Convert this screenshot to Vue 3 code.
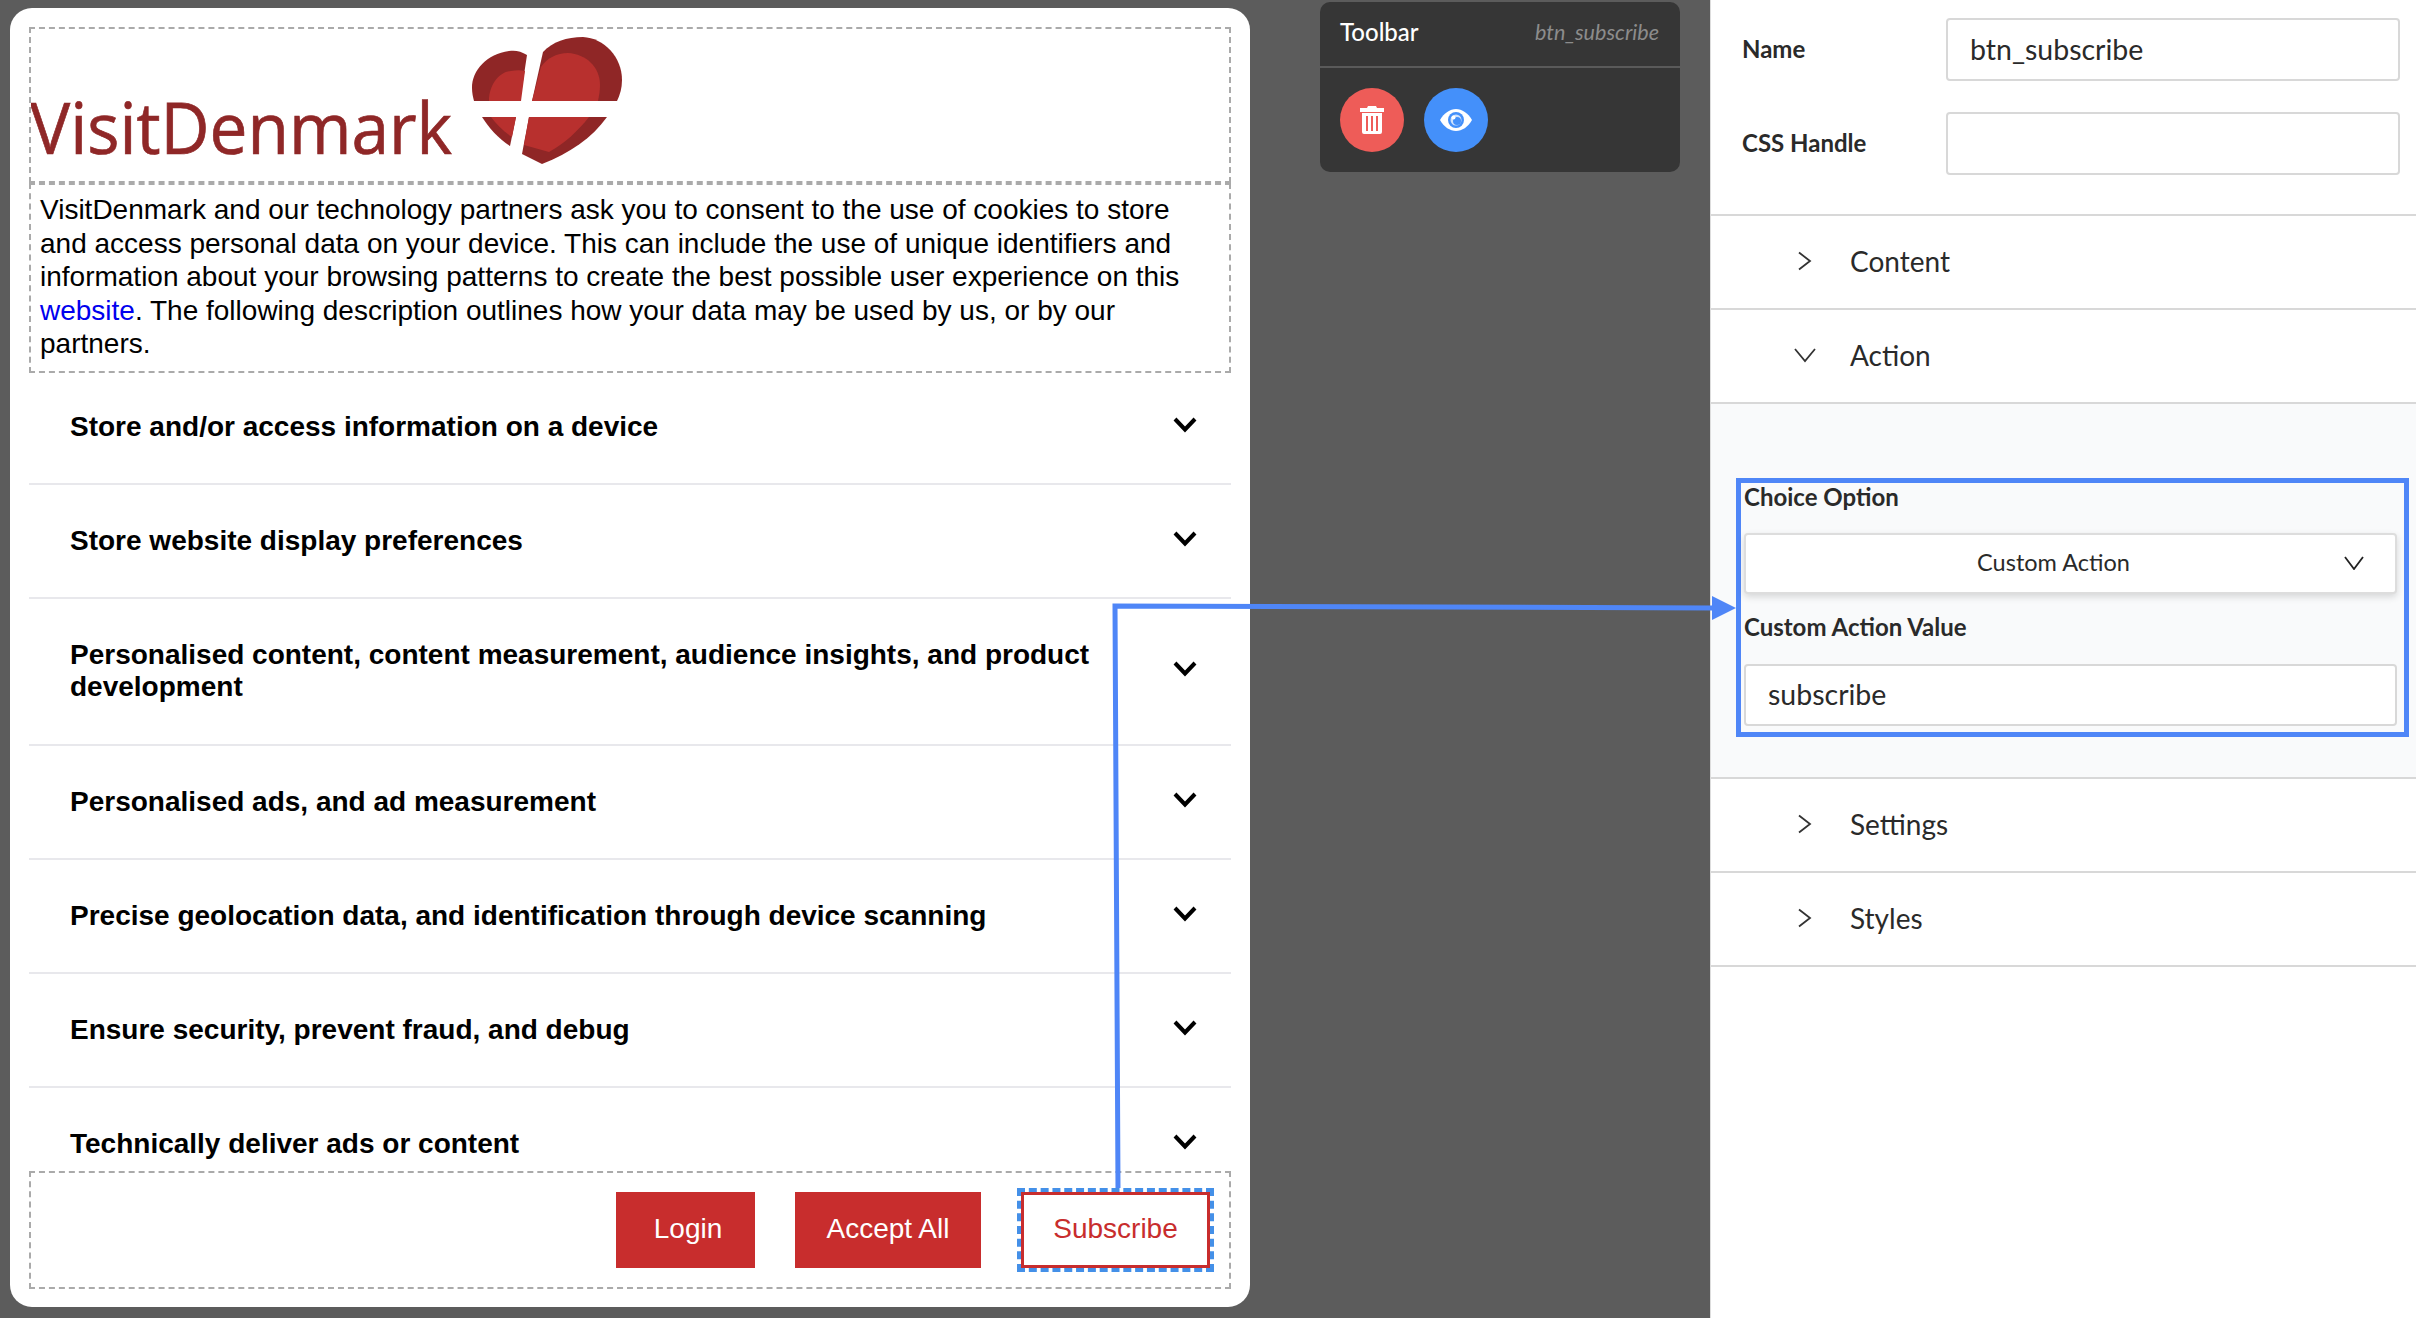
<template>
  <div class="page">
    <div class="stage">
      <section class="card">
        <div class="logo-box">
          <svg class="logo" width="600" height="150" viewBox="29 27 600 150">
            <text x="30" y="154" class="logo-text" textLength="422" lengthAdjust="spacingAndGlyphs">VisitDenmark</text>
            <path fill="#8f2626" d="M527 55C521 51 515 50 509 51C487 54 472 70 472 88C472 93 473 97 474 101H520Z" />
            <path fill="#b8302e" d="M489 101C489 85 499 72 511 71C516 70 521 70 525 71L521 101Z" />
            <path fill="#8f2626" d="M532 101L543 52C552 42 567 37 583 37C604 38 622 57 622 80C622 88 620 95 617 101Z" />
            <path fill="#b8302e" d="M532 101L541 67C547 58 557 53 568 53C586 54 600 67 600 85C600 91 599 96 598 101Z" />
            <path fill="#8f2626" d="M482 117H516L510 146C498 138 489 128 482 117Z" />
            <path fill="#b8302e" d="M491 117H516L512 137C503 131 496 124 491 117Z" />
            <path fill="#8f2626" d="M529 117H607C592 138 570 153 542 164L522 154Z" />
            <path fill="#b8302e" d="M529 117H589C578 131 565 143 549 152L524 145Z" />
          </svg>
        </div>
        <div class="intro">
          <span class="intro-line">VisitDenmark and our technology partners ask you to consent to the use of cookies to store and access personal data on your device. This can include the use of unique identifiers and information about your browsing patterns to create the best possible user experience on this</span>
          <span class="intro-line"><a class="link">website</a><span>. The following description outlines how your data may be used by us, or by our</span></span>
          <span class="intro-line">partners.</span>
        </div>
        <div class="purposes">
          <div v-for="p in purposes" :key="p" class="purpose">
            <span class="purpose-text">{{ p }}</span>
            <svg class="chev" width="24" height="16" viewBox="0 0 24 16">
              <polyline points="2,2 12,12.5 22,2" fill="none" stroke="#000" stroke-width="4" />
            </svg>
          </div>
        </div>
        <div class="actions">
          <button class="btn login">Login</button>
          <button class="btn accept">Accept All</button>
          <div class="selected">
            <button class="btn subscribe">Subscribe</button>
          </div>
        </div>
      </section>

      <aside class="toolbar">
        <header class="toolbar-head">
          <span class="toolbar-title">Toolbar</span>
          <em class="toolbar-name">btn_subscribe</em>
        </header>
        <div class="toolbar-body">
          <button class="round red">
            <svg width="24" height="28" viewBox="0 0 24 28">
              <path fill="#fff" d="M8 0h8l1 2h7v4H0V2h7z" />
              <path fill="#fff" fill-rule="evenodd" d="M2 7h20v19a2 2 0 0 1-2 2H4a2 2 0 0 1-2-2zM6 10v15h2V10zM11 10v15h2V10zM16 10v15h2V10z" />
            </svg>
          </button>
          <button class="round blue">
            <svg width="32" height="22" viewBox="0 0 32 22">
              <path fill="#fff" d="M0 11C4 4 10 0 16 0s12 4 16 11c-4 7-10 11-16 11S4 18 0 11z" />
              <circle cx="16" cy="11" r="8" fill="#4490fa" />
              <circle cx="16" cy="11" r="5.500" fill="#cfe2fd" />
              <circle cx="17" cy="12" r="4" fill="#4490fa" />
              <circle cx="13.500" cy="8.500" r="2" fill="#fff" />
            </svg>
          </button>
        </div>
      </aside>
    </div>

    <aside class="panel">
      <div class="fields">
        <label class="field">
          <span class="field-label">Name</span>
          <input class="text-input" value="btn_subscribe" readonly />
        </label>
        <label class="field">
          <span class="field-label">CSS Handle</span>
          <input class="text-input" value="" readonly />
        </label>
      </div>

      <div class="section">
        <svg class="sec-icon" width="28" height="20" viewBox="0 0 28 20">
          <polyline points="8,1.500 19,10 8,18.500" fill="none" stroke="#333" stroke-width="1.800" />
        </svg>
        <span>Content</span>
      </div>
      <div class="section">
        <svg class="sec-icon" width="28" height="20" viewBox="0 0 28 20">
          <polyline points="4,4 14,16 24,4" fill="none" stroke="#333" stroke-width="1.800" />
        </svg>
        <span>Action</span>
      </div>

      <div class="section-body">
        <div class="highlight">
          <div class="hl-label">Choice Option</div>
          <div class="select">
            <span>Custom Action</span>
            <svg class="select-icon" width="20" height="14" viewBox="0 0 20 14">
              <polyline points="1,1 10,13 19,1" fill="none" stroke="#222" stroke-width="1.800" />
            </svg>
          </div>
          <div class="hl-label second">Custom Action Value</div>
          <input class="text-input wide" value="subscribe" readonly />
        </div>
      </div>

      <div class="section">
        <svg class="sec-icon" width="28" height="20" viewBox="0 0 28 20">
          <polyline points="8,1.500 19,10 8,18.500" fill="none" stroke="#333" stroke-width="1.800" />
        </svg>
        <span>Settings</span>
      </div>
      <div class="section">
        <svg class="sec-icon" width="28" height="20" viewBox="0 0 28 20">
          <polyline points="8,1.500 19,10 8,18.500" fill="none" stroke="#333" stroke-width="1.800" />
        </svg>
        <span>Styles</span>
      </div>
    </aside>

    <!-- annotation arrow drawn on top of the screenshot -->
    <svg class="arrow" width="2416" height="1318" viewBox="0 0 2416 1318">
      <polyline points="1118,1188 1115,606 1715,608" fill="none" stroke="#4f86f7" stroke-width="5" />
      <polygon points="1712,596 1736,608 1712,620" fill="#4f86f7" />
    </svg>
  </div>
</template>

<script setup>
const purposes = [
  'Store and/or access information on a device',
  'Store website display preferences',
  'Personalised content, content measurement, audience insights, and product development',
  'Personalised ads, and ad measurement',
  'Precise geolocation data, and identification through device scanning',
  'Ensure security, prevent fraud, and debug',
  'Technically deliver ads or content'
]
</script>

<style scoped>
.page {
  position: relative;
  display: flex;
  width: 2416px;
  height: 1318px;
  overflow: hidden;
  background: #5c5c5c;
}
.stage {
  display: flex;
  align-items: flex-start;
  width: 1710px;
  flex: none;
}
.card {
  display: flex;
  flex-direction: column;
  box-sizing: border-box;
  width: 1240px;
  height: 1299px;
  margin: 8px 0 0 10px;
  padding: 19px 19px 18px;
  background: #fff;
  border-radius: 22px;
  font-family: "Liberation Sans", Arial, sans-serif;
  color: #000;
}
.logo-box {
  box-sizing: border-box;
  height: 156px;
  border: 2px dashed #aaa;
  overflow: hidden;
}
.logo {
  display: block;
  margin: -2px 0 0 -2px;
}
.logo-text {
  font-family: "Open Sans", sans-serif;
  font-size: 71px;
  fill: #8f2727;
  stroke: #8f2727;
  stroke-width: 0.7px;
}
.intro {
  box-sizing: border-box;
  height: 190px;
  padding: 8px 30px 0 9px;
  border: 2px dashed #aaa;
  font-size: 28px;
  line-height: 33.5px;
}
.intro-line {
  display: block;
}
.link {
  color: #0000ee;
}
.purposes {
  flex: 1;
  min-height: 0;
  overflow: hidden;
  margin-top: -2px;
}
.purpose {
  display: flex;
  align-items: center;
  box-sizing: border-box;
  padding: 40px 34px 40px 41px;
  border-bottom: 2px solid #e8e8ec;
}
.purpose:nth-child(3) {
  padding-bottom: 41px;
}
.purpose-text {
  flex: 1;
  padding-right: 62px;
  font-size: 28px;
  line-height: 32px;
  font-weight: 700;
}
.chev {
  flex: none;
  margin-top: -5px;
}
.actions {
  display: flex;
  align-items: center;
  justify-content: flex-end;
  box-sizing: border-box;
  flex: none;
  height: 118px;
  padding-right: 15px;
  border: 2px dashed #aaa;
}
.btn {
  box-sizing: border-box;
  height: 76px;
  padding: 0 0 2px;
  border: 3px solid #c82d2d;
  background: #c82d2d;
  color: #fff;
  font-family: inherit;
  font-size: 28px;
}
.login {
  width: 139px;
  padding-left: 5px;
}
.accept {
  width: 186px;
  margin-left: 40px;
}
.selected {
  display: flex;
  margin-left: 36px;
  border: 4px dashed #4490e8;
}
.subscribe {
  width: 189px;
  background: #fff;
  color: #c82d2d;
}
.toolbar {
  width: 360px;
  height: 170px;
  margin: 2px 0 0 70px;
  background: #363636;
  border-radius: 10px;
  font-family: Lato, sans-serif;
}
.toolbar-head {
  display: flex;
  align-items: center;
  justify-content: space-between;
  box-sizing: border-box;
  height: 66px;
  padding: 0 21px 5px 20px;
  border-bottom: 2px solid #5a5a5a;
}
.toolbar-title {
  color: #fff;
  font-size: 24px;
  font-weight: 500;
}
.toolbar-name {
  color: #8c8c8c;
  font-size: 21.600px;
}
.toolbar-body {
  display: flex;
  gap: 20px;
  padding: 20px;
}
.round {
  display: flex;
  align-items: center;
  justify-content: center;
  width: 64px;
  height: 64px;
  padding: 0;
  border: 0;
  border-radius: 50%;
}
.red {
  background: #ee5c58;
}
.blue {
  background: #4490fa;
}
.panel {
  flex: 1;
  box-sizing: border-box;
  background: #fff;
  border-left: 1px solid #ddd;
  font-family: Lato, sans-serif;
  color: #2a2a2a;
}
.fields {
  display: flex;
  flex-direction: column;
  gap: 31px;
  box-sizing: border-box;
  height: 216px;
  padding: 18px 16px 0 31px;
  border-bottom: 2px solid #d8d8d8;
}
.field {
  display: flex;
  align-items: center;
}
.field-label {
  width: 204px;
  padding-bottom: 2px;
  font-size: 24px;
  font-weight: 700;
}
.text-input {
  flex: 1;
  box-sizing: border-box;
  width: 100%;
  height: 63px;
  padding: 0 22px 2px;
  border: 2px solid #d8d8d8;
  border-radius: 4px;
  background: #fff;
  color: #2a2a2a;
  font-family: inherit;
  font-size: 28.500px;
  outline: none;
}
.section {
  display: flex;
  align-items: center;
  gap: 31px;
  box-sizing: border-box;
  height: 94px;
  padding: 0 0 2px 80px;
  border-bottom: 2px solid #d8d8d8;
  font-size: 28px;
}
.sec-icon {
  flex: none;
}
.section-body {
  box-sizing: border-box;
  height: 375px;
  padding: 74px 7px 40px 25px;
  background: #f9fafb;
  border-bottom: 2px solid #d8d8d8;
}
.highlight {
  box-sizing: border-box;
  height: 259px;
  padding: 0 7px 0 3px;
  border: 5px solid #4f86f7;
}
.hl-label {
  display: flex;
  align-items: center;
  height: 30px;
  margin-bottom: 20px;
  padding-bottom: 3px;
  box-sizing: border-box;
  font-size: 24px;
  font-weight: 700;
}
.hl-label.second {
  margin: 19px 0 21px;
}
.select {
  position: relative;
  display: flex;
  align-items: center;
  justify-content: center;
  box-sizing: border-box;
  height: 61px;
  padding: 0 34px 3px 0;
  border: 2px solid #ddd;
  border-radius: 4px;
  background: #fff;
  box-shadow: 0 3px 7px rgba(0, 0, 0, 0.14);
  font-size: 23.500px;
}
.select-icon {
  position: absolute;
  right: 31px;
  top: 21px;
}
.wide {
  display: block;
  height: 62px;
}
.arrow {
  position: absolute;
  left: 0;
  top: 0;
  pointer-events: none;
}
</style>

<style>
body {
  margin: 0;
}
</style>
